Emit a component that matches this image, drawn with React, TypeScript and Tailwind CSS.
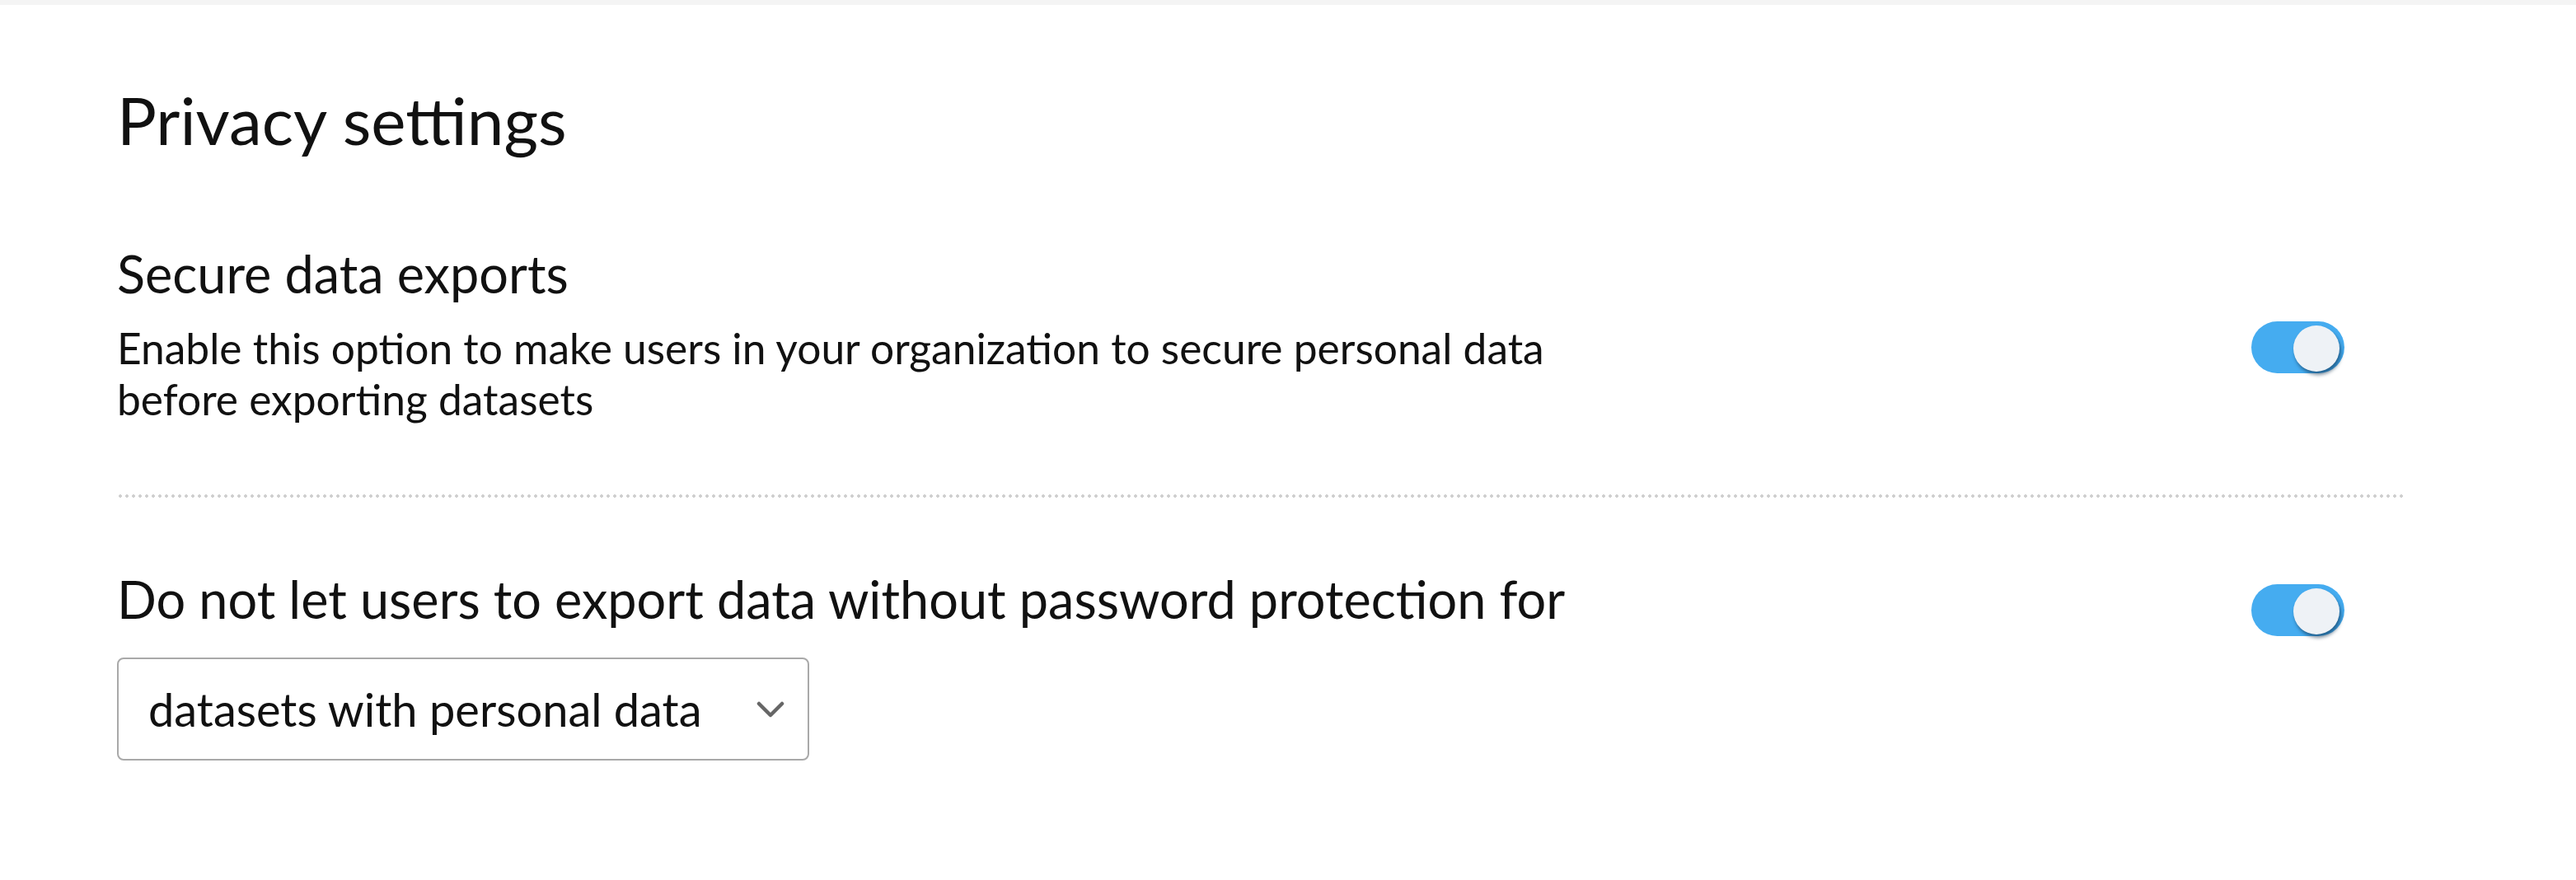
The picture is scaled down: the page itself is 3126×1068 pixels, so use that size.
import React from "react";

function Toggle({ className = "" }: { className?: string }) {
  return (
    <div className={`relative h-[63px] w-[113px] shrink-0 rounded-full bg-[#45acf0] ${className}`}>
      <div className="absolute left-[51px] top-[5px] h-[56px] w-[56px] rounded-full bg-[#eef2f6] shadow-[2px_4px_4px_rgba(10,40,70,0.55)]" />
    </div>
  );
}

export default function App() {
  return (
    <div className="min-h-[1068px] w-full bg-white font-['Lato',sans-serif] text-[#111111]">
      <div className="h-[6px] bg-[#f4f4f4]" />
      <div className="pl-[142px] pr-[206px]">
        <h1 className="mt-[91px] text-[80px] font-normal leading-[96px]">Privacy settings</h1>

        <h2 className="mt-[100px] text-[63px] font-normal leading-[77px]">Secure data exports</h2>
        <div className="mt-[21px] flex items-start justify-between">
          <p className="text-[51.5px] leading-[62px]">
            Enable this option to make users in your organization to secure personal data
            <br />
            before exporting datasets
          </p>
          <Toggle className="mr-[75px] -mt-[1px]" />
        </div>

        <div className="mt-[85px] h-[4px] bg-[radial-gradient(circle,#cfcfcf_1.6px,transparent_1.8px)] bg-[length:8px_4px]" />

        <div className="mt-[84px] flex items-start justify-between">
          <h2 className="text-[63px] font-normal leading-[77px]">
            Do not let users to export data without password protection for
          </h2>
          <Toggle className="mr-[75px] mt-[21px]" />
        </div>

        <div className="mt-[26px] flex h-[125px] w-[840px] items-center justify-between rounded-[8px] border-2 border-[#a9a9a9] pl-[36px] pr-[28px]">
          <span className="text-[56px] leading-none">datasets with personal data</span>
          <svg width="34" height="20" viewBox="0 0 34 20" fill="none">
            <path d="M3 3 L17 17 L31 3" stroke="#666666" strokeWidth="4.5" strokeLinecap="round" strokeLinejoin="round" />
          </svg>
        </div>
      </div>
    </div>
  );
}
